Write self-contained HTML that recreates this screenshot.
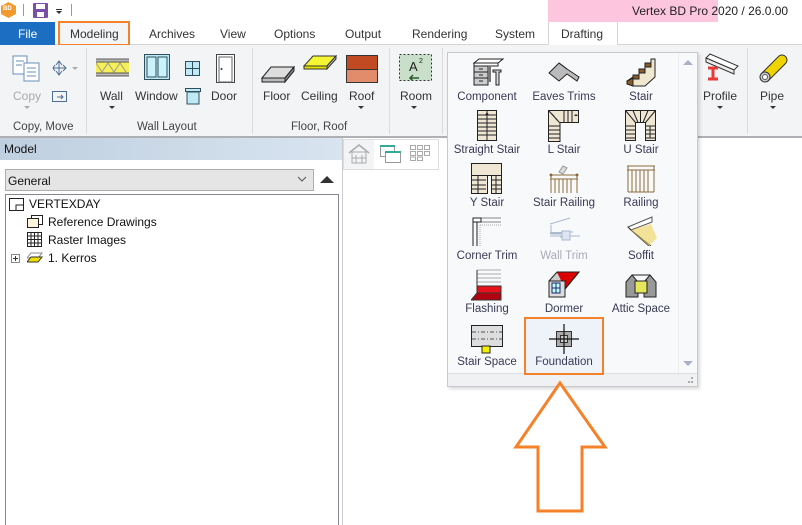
<!DOCTYPE html>
<html><head><meta charset="utf-8"><style>
*{margin:0;padding:0;box-sizing:border-box}
body{width:802px;height:525px;overflow:hidden;background:#fff;font-family:"Liberation Sans",sans-serif;font-size:12px;color:#333;position:relative}
.a{position:absolute}
.t{position:absolute;white-space:nowrap}
.lbl{position:absolute;width:80px;text-align:center;font-size:11.5px;color:#3a3a55}
.rb{position:absolute;font-size:12px;color:#333;text-align:center;white-space:nowrap}
.grp{position:absolute;top:121px;font-size:11.5px;color:#444;white-space:nowrap}
.sep{position:absolute;top:48px;width:1px;height:86px;background:#dadbdd}
.dd{position:absolute;width:0;height:0;border-left:3px solid transparent;border-right:3px solid transparent;border-top:3px solid #333}
</style></head><body>
<!-- title bar -->
<div class="a" style="left:0;top:0;width:802px;height:22px;background:#fff"></div>
<div class="a" style="left:1px;top:2px;width:15px;height:16px;background:#f39a2e;clip-path:polygon(50% 0,100% 25%,100% 75%,50% 100%,0 75%,0 25%)"></div>
<div class="t" style="left:3px;top:6px;font-size:6px;color:#fff;font-weight:bold">BD</div>
<div class="a" style="left:23px;top:4px;width:1px;height:12px;background:#999"></div>
<div class="a" style="left:33px;top:3px;width:15px;height:15px;background:#7b4fa8;border-radius:1px"></div>
<div class="a" style="left:36px;top:4px;width:9px;height:5px;background:#fff"></div>
<div class="a" style="left:37px;top:12px;width:7px;height:5px;background:#fff"></div>
<div class="a" style="left:56px;top:9px;width:6px;height:1px;background:#333"></div>
<div class="dd" style="left:56px;top:11px"></div>
<div class="a" style="left:71px;top:4px;width:1px;height:12px;background:#999"></div>
<div class="a" style="left:548px;top:0;width:170px;height:22px;background:#fdc6de"></div>
<div class="t" style="left:632px;top:4px;font-size:12px;color:#222">Vertex BD Pro 2020 / 26.0.00</div>
<!-- tabs -->
<div class="a" style="left:0;top:22px;width:802px;height:23px;background:#fff;border-bottom:1px solid #d5d5d5"></div>
<div class="a" style="left:0;top:22px;width:55px;height:23px;background:#1b6ec2"></div>
<div class="t" style="left:18px;top:27px;color:#fff;font-size:12px">File</div>
<div class="a" style="left:58px;top:21px;width:72px;height:25px;border:2px solid #f5822a;background:#f3f4f6"></div>
<div class="t" style="left:70px;top:27px;color:#333">Modeling</div>
<div class="t" style="left:149px;top:27px;color:#333">Archives</div>
<div class="t" style="left:220px;top:27px;color:#333">View</div>
<div class="t" style="left:274px;top:27px;color:#333">Options</div>
<div class="t" style="left:345px;top:27px;color:#333">Output</div>
<div class="t" style="left:412px;top:27px;color:#333">Rendering</div>
<div class="t" style="left:495px;top:27px;color:#333">System</div>
<div class="a" style="left:548px;top:22px;width:70px;height:23px;border-left:1px solid #d5d5d5;border-right:1px solid #d5d5d5;background:#fff"></div>
<div class="t" style="left:561px;top:27px;color:#333">Drafting</div>
<!-- ribbon -->
<div class="a" style="left:0;top:45px;width:802px;height:92px;background:#f3f4f6;border-bottom:1px solid #c8c8c8"></div>
<div class="a" style="left:0;top:136px;width:802px;height:2px;background:#aeb0b3"></div>
<div class="sep" style="left:86px"></div><div class="sep" style="left:252px"></div><div class="sep" style="left:389px"></div><div class="sep" style="left:442px"></div><div class="sep" style="left:747px"></div>
<!-- copy -->
<svg class="a" style="left:12px;top:55px" width="32" height="28"><rect x="1" y="1" width="14" height="18" fill="#fff" stroke="#6a8fb8"/><rect x="12" y="8" width="15" height="18" fill="#fff" stroke="#6a8fb8"/><path d="M15 13h9M15 17h9M15 21h9M4 6h8M4 10h6" stroke="#6a8fb8"/></svg>
<svg class="a" style="left:52px;top:60px" width="26" height="16"><path d="M7 1v14M1 8h13M4 5l3-4 3 4M4 11l3 4 3-4M3 5l-2 3 2 3M11 5l3 3-3 3" stroke="#4b6f97" fill="none"/><path d="M20 7l3 3 3-3z" fill="#aaa"/></svg>
<div class="rb" style="left:13px;top:89px;color:#aaa">Copy</div>
<div class="dd" style="left:24px;top:106px;border-top-color:#aaa"></div>
<svg class="a" style="left:52px;top:91px" width="16" height="12"><rect x="0.5" y="0.5" width="14" height="10" fill="none" stroke="#4b6f97"/><path d="M5 6h6M9 4l2 2-2 2" stroke="#4b6f97" fill="none"/></svg>
<div class="grp" style="left:13px">Copy, Move</div>
<!-- wall layout -->
<svg class="a" style="left:96px;top:58px" width="33" height="20"><rect x="0" y="0" width="33" height="20" fill="#fff"/><rect x="0" y="1" width="33" height="3" fill="#bbb"/><rect x="0" y="4" width="33" height="11" fill="#f7ef56"/><path d="M0 5l6 9 6-9 6 9 6-9 6 9" stroke="#999" fill="none"/><rect x="0" y="15" width="33" height="3" fill="#bbb"/><path d="M0 1h33M0 4h33M0 15h33M0 18h33" stroke="#555"/></svg>
<div class="rb" style="left:100px;top:89px">Wall</div><div class="dd" style="left:109px;top:106px"></div>
<svg class="a" style="left:144px;top:54px" width="26" height="26"><rect x="0.5" y="0.5" width="25" height="25" fill="#bfeaf5" stroke="#2f4f5f"/><rect x="3" y="3" width="9" height="20" fill="#c9f2fb" stroke="#2f4f5f"/><rect x="14" y="3" width="9" height="20" fill="#c9f2fb" stroke="#2f4f5f"/></svg>
<div class="rb" style="left:135px;top:89px">Window</div>
<svg class="a" style="left:185px;top:61px" width="15" height="15"><rect x="0.5" y="0.5" width="14" height="14" fill="#bfeaf5" stroke="#2f4f5f"/><path d="M7.5 0v15M0 7.5h15" stroke="#2f4f5f"/></svg>
<svg class="a" style="left:185px;top:88px" width="16" height="17"><rect x="0.5" y="0.5" width="15" height="3" fill="#bfeaf5" stroke="#2f4f5f"/><rect x="2" y="4" width="12" height="12" fill="#bfeaf5" stroke="#2f4f5f"/></svg>
<svg class="a" style="left:216px;top:54px" width="19" height="29"><rect x="0.5" y="0.5" width="18" height="28" fill="#fff" stroke="#444"/><rect x="3" y="3" width="13" height="25" fill="#fff" stroke="#666"/><circle cx="5.5" cy="15" r="1" fill="#333"/></svg>
<div class="rb" style="left:211px;top:89px">Door</div>
<div class="grp" style="left:137px">Wall Layout</div>
<!-- floor -->
<svg class="a" style="left:261px;top:66px" width="34" height="18"><path d="M1 12L10 1h23l-9 11z" fill="#ddd" stroke="#222"/><path d="M1 12h23v4H1z" fill="#bbb" stroke="#222"/><path d="M24 12l9-11v4l-9 11z" fill="#888" stroke="#222"/></svg>
<div class="rb" style="left:263px;top:89px">Floor</div>
<svg class="a" style="left:303px;top:55px" width="34" height="17"><path d="M1 11L10 1h23l-9 10z" fill="#f5f533" stroke="#333"/><path d="M1 11h23v3H1z" fill="#e4e400" stroke="#333"/><path d="M24 11l9-10v3l-9 10z" fill="#bbb" stroke="#333"/></svg>
<div class="rb" style="left:301px;top:89px">Ceiling</div>
<svg class="a" style="left:346px;top:55px" width="32" height="28"><rect x="0.5" y="0.5" width="31" height="14" fill="#c24a22" stroke="#333"/><rect x="0.5" y="14.5" width="31" height="13" fill="#e38c6c" stroke="#333"/></svg>
<div class="rb" style="left:349px;top:89px">Roof</div><div class="dd" style="left:358px;top:106px"></div>
<div class="grp" style="left:291px">Floor, Roof</div>
<!-- room -->
<svg class="a" style="left:399px;top:54px" width="33" height="27"><rect x="0.5" y="0.5" width="32" height="26" fill="#c9dfc9" stroke="#333" stroke-dasharray="2 2"/><text x="10" y="17" font-size="13" font-family="Liberation Sans" fill="#222">A</text><text x="20" y="9" font-size="7" font-family="Liberation Sans" fill="#222">2</text><path d="M20 24h-9M14 21l-3 3 3 3" stroke="#2c5a2c" stroke-width="1.5" fill="none"/></svg>
<div class="rb" style="left:400px;top:89px">Room</div><div class="dd" style="left:411px;top:106px"></div>
<!-- profile, pipe -->
<svg class="a" style="left:704px;top:52px" width="36" height="30"><path d="M2 6l4-4 28 12-4 4z" fill="#fff" stroke="#333"/><path d="M2 6l28 12v4L2 10z" fill="#eee" stroke="#333"/><path d="M4 16h10M9 16v11M4 27h10" stroke="#e83a3a" stroke-width="3"/></svg>
<div class="rb" style="left:703px;top:89px">Profile</div><div class="dd" style="left:717px;top:106px"></div>
<svg class="a" style="left:757px;top:52px" width="32" height="32"><path d="M4 22L22 4a5 5 0 0 1 7 7L11 29z" fill="#f0d400" stroke="#333"/><ellipse cx="8" cy="25" rx="5" ry="5" transform="rotate(45 8 25)" fill="#ccc" stroke="#333"/><circle cx="8" cy="25" r="2.5" fill="#fff" stroke="#555"/></svg>
<div class="rb" style="left:760px;top:89px">Pipe</div><div class="dd" style="left:770px;top:106px"></div>
<!-- left panel -->
<div class="a" style="left:0;top:138px;width:343px;height:22px;background:linear-gradient(90deg,#bfcfdf,#d8e4f0)"></div>
<div class="t" style="left:4px;top:142px;font-size:12px;color:#111">Model</div>
<div class="a" style="left:0;top:160px;width:343px;height:365px;background:#fff"></div>
<div class="a" style="left:5px;top:169px;width:309px;height:22px;background:#e5e5e5;border:1px solid #adadad"></div>
<div class="t" style="left:8px;top:174px;font-size:12px;color:#111">General</div>
<svg class="a" style="left:297px;top:176px" width="10" height="6"><path d="M1 1l4 4 4-4" stroke="#555" fill="none"/></svg>
<div class="a" style="left:320px;top:176px;width:0;height:0;border-left:7px solid transparent;border-right:7px solid transparent;border-bottom:7px solid #333"></div>
<div class="a" style="left:5px;top:194px;width:334px;height:331px;border:1px solid #828790;border-bottom:none"></div>
<div class="a" style="left:342px;top:138px;width:1px;height:387px;background:#ccc"></div>
<svg class="a" style="left:9px;top:198px" width="16" height="14"><rect x="0.5" y="0.5" width="14" height="12" fill="#fff" stroke="#222"/><path d="M7 12.5V7H15" stroke="#222" fill="none"/></svg>
<div class="t" style="left:29px;top:197px;font-size:12px;color:#111">VERTEXDAY</div>
<svg class="a" style="left:27px;top:215px" width="16" height="14"><rect x="4.5" y="0.5" width="11" height="9" fill="#fff" stroke="#222"/><rect x="0.5" y="3.5" width="11" height="9" fill="#fff5dc" stroke="#222"/></svg>
<div class="t" style="left:48px;top:215px;font-size:12px;color:#111">Reference Drawings</div>
<svg class="a" style="left:27px;top:232px" width="15" height="15"><rect x="0.5" y="0.5" width="14" height="14" fill="#fff" stroke="#222"/><path d="M4 0v15M7.5 0v15M11 0v15M0 4h15M0 7.5h15M0 11h15" stroke="#222"/></svg>
<div class="t" style="left:48px;top:233px;font-size:12px;color:#111">Raster Images</div>
<svg class="a" style="left:11px;top:254px" width="10" height="10"><rect x="0.5" y="0.5" width="8" height="8" fill="#fff" stroke="#888"/><path d="M2 4.5h5M4.5 2v5" stroke="#333"/></svg>
<svg class="a" style="left:27px;top:252px" width="16" height="12"><path d="M4 1h11l-4 5H0z" fill="none" stroke="#888"/><path d="M4 5h11l-4 5H0z" fill="#f0e000" stroke="#333"/></svg>
<div class="t" style="left:48px;top:251px;font-size:12px;color:#111">1. Kerros</div>
<!-- mini toolbar -->
<div class="a" style="left:343px;top:139px;width:96px;height:31px;border:1px solid #ddd;background:#fff"></div>
<div class="a" style="left:344px;top:140px;width:30px;height:29px;background:#f2f4f6"></div>
<svg class="a" style="left:348px;top:144px" width="22" height="20"><path d="M1 9L11 1l10 8" stroke="#aaa" fill="none" stroke-width="1.5"/><rect x="4" y="8" width="14" height="11" fill="none" stroke="#aaa"/><path d="M8 11v8M14 11v8M4 14h14" stroke="#aaa"/></svg>
<svg class="a" style="left:380px;top:145px" width="22" height="19"><rect x="0.5" y="0.5" width="14" height="11" fill="#fff" stroke="#999"/><path d="M0 1h15" stroke="#3a9" stroke-width="2"/><rect x="5.5" y="6.5" width="15" height="11" fill="#fff" stroke="#999"/><path d="M5 7h16" stroke="#3a9" stroke-width="2"/></svg>
<svg class="a" style="left:410px;top:145px" width="20" height="16"><g fill="none" stroke="#aaa"><rect x=".5" y=".5" width="5" height="4"/><rect x="7.5" y=".5" width="5" height="4"/><rect x="14.5" y=".5" width="5" height="4"/><rect x=".5" y="6.5" width="5" height="4"/><rect x="7.5" y="6.5" width="5" height="4"/><rect x="14.5" y="6.5" width="5" height="4"/><rect x=".5" y="12" width="5" height="3.5"/><rect x="7.5" y="12" width="5" height="3.5"/></g></svg>
<!-- popup -->
<div class="a" style="left:447px;top:52px;width:251px;height:335px;background:#f8f9fb;border:1px solid #c7c9cc;box-shadow:2px 2px 3px rgba(0,0,0,.15)"></div>
<div class="a" style="left:678px;top:53px;width:19px;height:320px;background:#f8f9fb;border-left:1px solid #eceef0"></div>
<div class="a" style="left:683px;top:60px;width:0;height:0;border-left:5px solid transparent;border-right:5px solid transparent;border-bottom:5px solid #a8b0c8"></div>
<div class="a" style="left:683px;top:361px;width:0;height:0;border-left:5px solid transparent;border-right:5px solid transparent;border-top:5px solid #a8b0c8"></div>
<div class="a" style="left:448px;top:373px;width:249px;height:13px;background:#f0f1f3;border-top:1px solid #dcdee2"></div>
<svg class="a" style="left:686px;top:377px" width="8" height="8" fill="#aaa"><rect x="5" y="0" width="2" height="2"/><rect x="2" y="4" width="2" height="2"/><rect x="5" y="4" width="2" height="2"/></svg>
<!-- foundation highlight -->
<div class="a" style="left:524px;top:317px;width:80px;height:58px;border:2px solid #f5822a;background:#eef3fa"></div>
<!-- labels -->
<div class="lbl" style="left:447px;top:91px">Component</div>
<div class="lbl" style="left:524px;top:91px">Eaves Trims</div>
<div class="lbl" style="left:601px;top:91px">Stair</div>
<div class="lbl" style="left:447px;top:144px">Straight Stair</div>
<div class="lbl" style="left:524px;top:144px">L Stair</div>
<div class="lbl" style="left:601px;top:144px">U Stair</div>
<div class="lbl" style="left:447px;top:197px">Y Stair</div>
<div class="lbl" style="left:524px;top:197px">Stair Railing</div>
<div class="lbl" style="left:601px;top:197px">Railing</div>
<div class="lbl" style="left:447px;top:250px">Corner Trim</div>
<div class="lbl" style="left:524px;top:250px;color:#aab">Wall Trim</div>
<div class="lbl" style="left:601px;top:250px">Soffit</div>
<div class="lbl" style="left:447px;top:303px">Flashing</div>
<div class="lbl" style="left:524px;top:303px">Dormer</div>
<div class="lbl" style="left:601px;top:303px">Attic Space</div>
<div class="lbl" style="left:447px;top:356px">Stair Space</div>
<div class="lbl" style="left:524px;top:356px">Foundation</div>
<!-- popup icons -->
<svg class="a" style="left:471px;top:57px" width="33" height="30"><path d="M3 6l5-4h24l-5 4z" fill="#fff" stroke="#222"/><rect x="3" y="6" width="24" height="3" fill="#fff" stroke="#222"/><rect x="3" y="9" width="14" height="19" fill="#ccc" stroke="#222"/><path d="M3 15h14M3 21h14M8 12h4M8 18h4M8 24h4" stroke="#222"/><rect x="17" y="9" width="3" height="16" fill="#777"/><path d="M22 13h8v2h-2v13h-3V15h-3z" fill="#ddd" stroke="#222"/></svg>
<svg class="a" style="left:548px;top:62px" width="32" height="22"><path d="M1 11l10-10 8 6 12 8-2 4-10-7-8 7z" fill="#bbb" stroke="#222"/><path d="M11 1l8 6" stroke="#222"/></svg>
<svg class="a" style="left:625px;top:57px" width="32" height="30"><path d="M2 24l6-4h6v-6h6V8h6V2h4v18l-10 9H8z" fill="#efe8d0" stroke="#222"/><path d="M2 24h6v-6h6v-6h6V6h6V2" fill="none" stroke="#222"/><path d="M2 24v3l6 2v-8zM8 18h6v4H8zM14 12h6v4h-6zM20 6h6v4h-6z" fill="#8b5a2b" stroke="#222"/></svg>
<svg class="a" style="left:477px;top:110px" width="20" height="31"><rect x="0.5" y="0.5" width="19" height="30" fill="#efe6d4" stroke="#222"/><path d="M0 5h20M0 9h20M0 13h20M0 17h20M0 21h20M0 25h20M10 0v31" stroke="#222"/><path d="M10 2l-2 3h4z" fill="#222"/></svg>
<svg class="a" style="left:548px;top:110px" width="32" height="32"><path d="M.5 .5h30v12H12v19H.5z" fill="#efe6d4" stroke="#222"/><path d="M16 .5v12M20 .5v12M24 .5v12M0 16h12M0 20h12M0 24h12M0 28h12M.5 .5l11 12M4 4l5 6" stroke="#222"/><path d="M26 6h4l-2-2z" fill="#222"/></svg>
<svg class="a" style="left:625px;top:110px" width="32" height="32"><path d="M.5 .5h30v30h-10v-18h-10v18H.5z" fill="#efe6d4" stroke="#222"/><path d="M.5 .5l10 12M30.5 .5l-10 12M15.5 .5v12M8 .5l5 12M23 .5l-5 12M0 16h10M0 20h10M0 24h10M0 28h10M20 16h10M20 20h10M20 24h10M20 28h10M25 16v12" stroke="#222"/></svg>
<svg class="a" style="left:471px;top:163px" width="32" height="31"><path d="M.5 .5h30v12h-14v18H.5z" fill="#efe6d4" stroke="#222"/><path d="M.5 12.5h30M7 12.5v18M0 17h15M0 22h15M0 26h15" stroke="#222"/><rect x="20.5" y="12.5" width="10" height="18" fill="#efe6d4" stroke="#222"/><path d="M20 17h11M20 22h11M20 26h11M25 12v19" stroke="#222"/></svg>
<svg class="a" style="left:548px;top:164px" width="32" height="30"><path d="M2 11h28M2 15h28M3 11v18M29 11v18M7 15v14M11 15v14M15 15v14M19 15v14M23 15v14" stroke="#8b6a3a" fill="none"/><circle cx="3" cy="11" r="1.5" fill="#8b6a3a"/><circle cx="29" cy="11" r="1.5" fill="#8b6a3a"/><path d="M11 8l4-6 4 2-4 6z" fill="#ddd" stroke="#999"/></svg>
<svg class="a" style="left:625px;top:164px" width="32" height="30"><path d="M2 2h28M2 6h28M3 2v26M29 2v26M7 6v22M11 6v22M15 6v22M19 6v22M23 6v22M3 28h26" stroke="#8b6a3a" fill="none"/></svg>
<svg class="a" style="left:471px;top:216px" width="32" height="30"><path d="M2 2h28M2 6h28M6 6v24M2 2v28" stroke="#888" fill="none"/><rect x="2" y="2" width="8" height="4" fill="#fff" stroke="#222"/><path d="M2 2v28M6 6v24" stroke="#222"/><path d="M9 9h21M9 9v21" stroke="#aaa" stroke-dasharray="1 1"/></svg>
<svg class="a" style="left:548px;top:216px" width="32" height="30" opacity=".6"><path d="M2 8l20-6M3 9v9h10M2 20h30M13 16h12M13 20v2" stroke="#7890b0" fill="none"/><rect x="14" y="15" width="8" height="9" fill="#cfd8ea" stroke="#7890b0"/><path d="M2 17h12" stroke="#7890b0" stroke-width="2"/></svg>
<svg class="a" style="left:625px;top:216px" width="32" height="30"><path d="M3 11l24-10v5L6 14z" fill="#fff" stroke="#555"/><path d="M3 11l3 3 20 16M6 14l18 16" stroke="#333" fill="none"/><path d="M6 14l20-6 6 14-8 8z" fill="#f0d35a" opacity=".6"/></svg>
<svg class="a" style="left:471px;top:269px" width="32" height="32"><path d="M6 1h24M6 5h24M6 9h24M6 13h24M6 17h24" stroke="#aaa"/><path d="M6 1v18" stroke="#333"/><rect x="6" y="17" width="24" height="7" fill="#e8101a" stroke="#333"/><path d="M0 31l6-7h24v7z" fill="#b30010" stroke="#333"/></svg>
<svg class="a" style="left:548px;top:269px" width="32" height="30"><path d="M1 12l8-9 8 9" fill="#ccc" stroke="#222"/><path d="M9 3h22l-14 17" fill="#d00" stroke="#222"/><rect x="1" y="12" width="16" height="16" fill="#ddd" stroke="#222"/><rect x="4" y="14" width="8" height="10" fill="#bff" stroke="#226"/><path d="M8 14v10M4 19h8" stroke="#226"/><path d="M17 20l14-17" stroke="#222"/></svg>
<svg class="a" style="left:625px;top:272px" width="32" height="26"><path d="M1 10l6-7 6 7v15H1z" fill="#999" stroke="#222"/><path d="M19 10l6-7 6 7v15H19z" fill="#999" stroke="#222"/><path d="M7 3h18" stroke="#222"/><rect x="10" y="9" width="12" height="12" fill="#e6e65c" stroke="#222"/></svg>
<svg class="a" style="left:471px;top:325px" width="32" height="30"><rect x="0.5" y="0.5" width="31" height="21" fill="#ddd" stroke="#222"/><path d="M1 7h30M1 14h30" stroke="#555" stroke-dasharray="4 2 1 2"/><rect x="11" y="21" width="8" height="7" fill="#f5f000" stroke="#222"/></svg>
<svg class="a" style="left:548px;top:323px" width="32" height="32"><rect x="8.5" y="8.5" width="15" height="15" fill="#aaa" stroke="#333"/><rect x="12.5" y="12.5" width="7" height="7" fill="#ccc" stroke="#333"/><path d="M16 1v30M1 16h30" stroke="#111" stroke-width="1.2"/></svg>
<!-- arrow -->
<svg class="a" style="left:0;top:0" width="802" height="525"><path d="M560 383L516 447H538V511H582V447H605Z" fill="#fff" stroke="#f5822a" stroke-width="3" stroke-linejoin="miter"/></svg>
</body></html>
